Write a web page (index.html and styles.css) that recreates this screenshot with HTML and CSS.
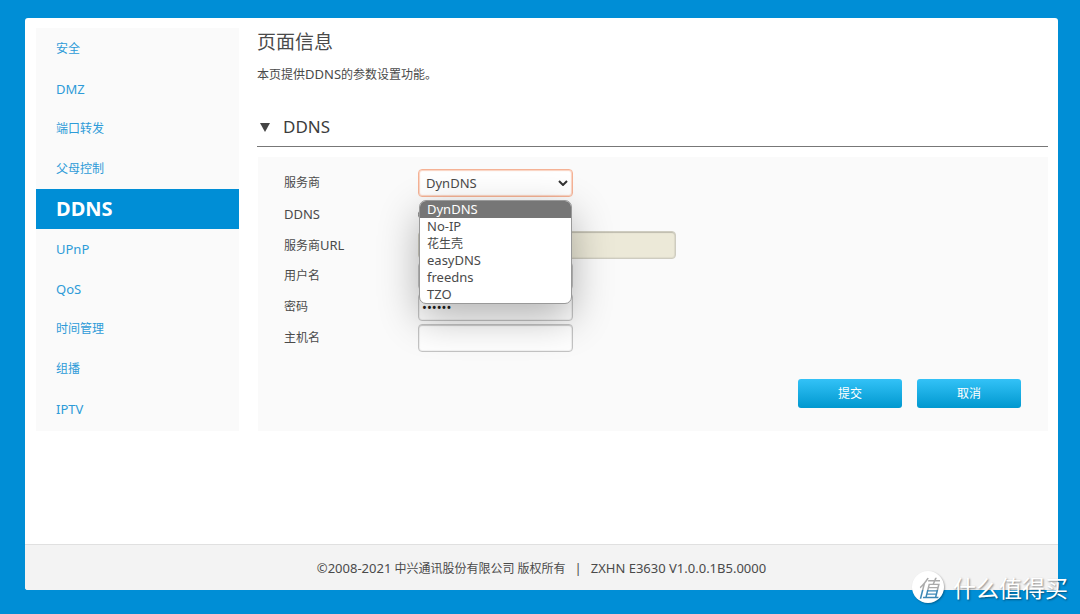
FILE: index.html
```html
<!DOCTYPE html>
<html lang="zh-CN">
<head>
<meta charset="utf-8">
<meta name="viewport" content="width=device-width, initial-scale=1">
<title>DDNS</title>
<link rel="stylesheet" href="styles.css">
</head>
<body>
<div class="card">
  <div class="body">
    <nav class="menu">
      <a class="menu-item" href="#">安全</a>
      <a class="menu-item latin" href="#">DMZ</a>
      <a class="menu-item" href="#">端口转发</a>
      <a class="menu-item" href="#">父母控制</a>
      <a class="menu-item active" href="#" aria-current="page">DDNS</a>
      <a class="menu-item latin" href="#">UPnP</a>
      <a class="menu-item latin" href="#">QoS</a>
      <a class="menu-item" href="#">时间管理</a>
      <a class="menu-item" href="#">组播</a>
      <a class="menu-item latin" href="#">IPTV</a>
    </nav>
    <main class="content">
      <h1 class="page-title">页面信息</h1>
      <p class="intro">本页提供<span class="latin">DDNS</span>的参数设置功能。</p>
      <h2 class="section-title">
        <svg class="arrow" viewBox="0 0 10 9" aria-hidden="true"><path d="M0 0h10L5 9z"/></svg>
        DDNS
      </h2>
      <form class="panel">
        <div class="row">
          <label class="label" for="provider">服务商</label>
          <div class="select-wrap">
            <select class="field select" id="provider">
              <option>DynDNS</option>
              <option>No-IP</option>
              <option>花生壳</option>
              <option>easyDNS</option>
              <option>freedns</option>
              <option>TZO</option>
            </select>
            <svg class="chevron" viewBox="0 0 10 6" aria-hidden="true"><path d="M1 1l4 4 4-4"/></svg>
            <ul class="dropdown" role="listbox" aria-label="服务商">
              <li class="option selected" role="option" aria-selected="true">DynDNS</li>
              <li class="option" role="option">No-IP</li>
              <li class="option cjk" role="option">花生壳</li>
              <li class="option" role="option">easyDNS</li>
              <li class="option" role="option">freedns</li>
              <li class="option" role="option">TZO</li>
            </ul>
          </div>
        </div>
        <div class="row">
          <label class="label latin" for="enable">DDNS</label>
          <input class="radio" type="radio" id="enable">
        </div>
        <div class="row">
          <label class="label" for="url">服务商<span class="latin">URL</span></label>
          <input class="field wide" type="text" id="url" disabled>
        </div>
        <div class="row">
          <label class="label" for="user">用户名</label>
          <input class="field" type="text" id="user">
        </div>
        <div class="row">
          <label class="label" for="password">密码</label>
          <input class="field password" type="password" id="password" value="123456">
        </div>
        <div class="row">
          <label class="label" for="host">主机名</label>
          <input class="field" type="text" id="host">
        </div>
        <div class="actions">
          <button class="button" type="button">提交</button>
          <button class="button" type="button">取消</button>
        </div>
      </form>
    </main>
  </div>
  <footer class="footer">
    <span><span class="latin">©2008-2021</span> 中兴通讯股份有限公司 版权所有</span>
    <span class="latin">|</span>
    <span class="latin">ZXHN E3630 V1.0.0.1B5.0000</span>
  </footer>
</div>
<div class="watermark">
  <span class="mark"><span class="mark-glyph">值</span></span>
  <span>什么值得买</span>
</div>
</body>
</html>
```
FILE: styles.css
```css
* { box-sizing: border-box; }

body {
  position: relative;
  display: flex;
  min-height: 100vh;
  margin: 0;
  padding: 18px 22px 24px 25px;
  background: #008ed6;
  color: #4a4a4a;
  font: 12px/20px "Noto Sans", "Noto Sans CJK SC", sans-serif;
}

.latin { font-size: 13px; }

.card {
  flex: 1;
  display: flex;
  flex-direction: column;
  overflow: hidden;
  border-radius: 3px;
  background: #fff;
}

.body {
  flex: 1;
  display: grid;
  grid-template-columns: 203px 1fr;
  align-items: start;
  gap: 18px;
  padding: 10px 10px 24px 11px;
}

.menu {
  display: flex;
  flex-direction: column;
  align-self: start;
  padding: 1px 0 2px;
  background: #fafafa;
}

.menu-item {
  padding: 10px 20px;
  color: #2d9bd8;
  text-decoration: none;
}

.menu-item.active {
  background: #008ed6;
  color: #fff;
  font-size: 20px;
  font-weight: 700;
}

.page-title {
  margin: 0;
  font-size: 19px;
  font-weight: 400;
  line-height: 28px;
}

.intro { margin: 8px 0 0; }

.section-title {
  display: flex;
  align-items: center;
  gap: 13px;
  margin: 29px 0 10px;
  padding: 0 3px 6px;
  border-bottom: 1px solid #777;
  color: #3c3c3c;
  font-size: 17px;
  font-weight: 400;
  line-height: 26px;
}

.arrow { width: 10px; height: 9px; fill: #444; }

.panel {
  display: grid;
  gap: 3px;
  margin-left: 1px;
  padding: 12px 27px 23px 26px;
  background: #fafafa;
}

.row {
  display: flex;
  align-items: center;
  min-height: 28px;
}

.label { width: 134px; }

.field {
  width: 155px;
  height: 28px;
  padding: 0 5px;
  border: 1px solid #c4c4c4;
  border-radius: 4px;
  outline: 0;
  background: #fff;
  box-shadow: inset 0 1px 1px rgba(0, 0, 0, 0.15), inset 0 0 1px 1px rgba(0, 0, 0, 0.06);
  color: #4a4a4a;
  font: inherit;
  font-size: 13px;
}

.wide { width: 258px; }

.wide:disabled {
  border-color: #ceccc0;
  background: #ece9d8;
}

.password { padding: 0 3px; color: #222; }

.select-wrap { position: relative; }

.select {
  display: block;
  padding: 0 7px;
  border-color: #f5b295;
  box-shadow: inset 0 0 1px 1px rgba(245, 165, 130, 0.5);
  appearance: none;
}

.chevron {
  position: absolute;
  top: 11px;
  right: 5px;
  width: 10px;
  height: 6px;
  fill: none;
  stroke: #333;
  stroke-width: 2;
  pointer-events: none;
}

.radio { width: 13px; height: 13px; margin: 0; }

.dropdown {
  position: absolute;
  z-index: 1;
  top: 31px;
  left: 1px;
  width: 153px;
  margin: 0;
  padding: 0;
  overflow: hidden;
  border: 1px solid #999;
  border-radius: 7px;
  background: #fff;
  box-shadow: 0 14px 40px rgba(0, 0, 0, 0.3);
  list-style: none;
}

.option {
  padding: 0 7px;
  font-size: 13px;
  line-height: 17px;
}

.option.cjk { font-size: 12px; }
.option.selected { background: #767676; color: #fff; }

.actions {
  display: flex;
  justify-content: flex-end;
  gap: 15px;
  margin-top: 24px;
}

.button {
  width: 104px;
  height: 29px;
  padding: 0;
  border: 0;
  border-radius: 3px;
  background: linear-gradient(#33c2f7, #0098cf);
  color: #fff;
  font: inherit;
}

.footer {
  display: flex;
  justify-content: center;
  gap: 9px;
  padding: 13px 20px 11px;
  border-top: 1px solid #e0e0e0;
  background: #f3f3f3;
}

.watermark {
  position: absolute;
  right: 12px;
  bottom: 11px;
  display: flex;
  align-items: center;
  gap: 9px;
  color: #fff;
  font-family: "Noto Sans CJK SC", sans-serif;
  font-size: 23px;
  line-height: 32px;
  text-shadow: 1px 1px 2px rgba(0, 0, 0, 0.45);
}

.mark {
  display: grid;
  place-items: center;
  width: 32px;
  height: 32px;
  border-radius: 50%;
  background: #fff;
  box-shadow: 1px 1px 2px rgba(0, 0, 0, 0.3);
}

.mark-glyph {
  background: linear-gradient(#aaa 60%, #3b87b5 60%);
  background-clip: text;
  color: transparent;
  font-style: italic;
  text-shadow: none;
}
```
